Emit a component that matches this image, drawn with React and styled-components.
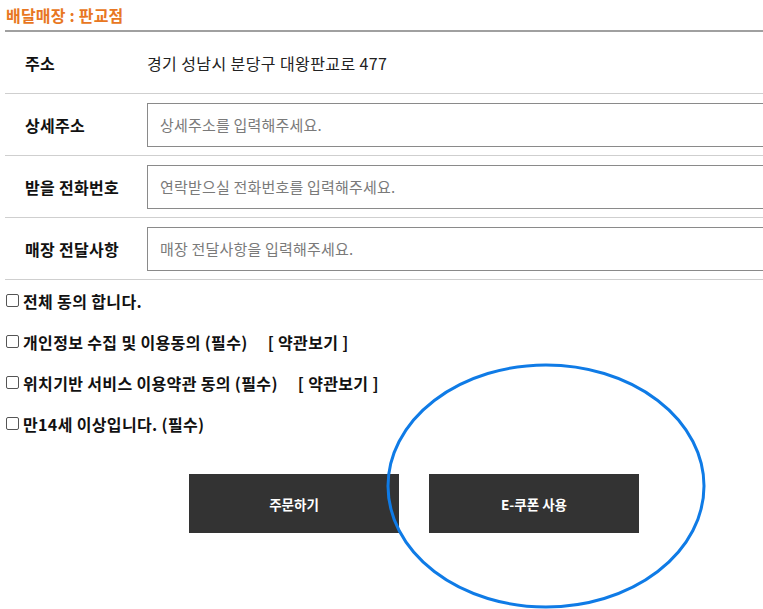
import React from "react";
import styled, { createGlobalStyle } from "styled-components";

const Global = createGlobalStyle`
  html, body { margin: 0; padding: 0; background: #fff; overflow: hidden; }
  body { font-family: "Noto Sans CJK KR", "Noto Sans", sans-serif; color: #222; }
`;

const Page = styled.div`
  position: relative;
  width: 818px;
  min-height: 609px;
  margin-left: 5px;
`;

const Header = styled.div`
  height: 30px;
  display: flex;
  align-items: center;
  padding-left: 1px;
  border-bottom: 2px solid #a0a0a0;
  color: #e87722;
  font-size: 16px;
  font-weight: 700;
  letter-spacing: 0.2px;
`;

const Row = styled.div`
  height: 61px;
  display: flex;
  align-items: center;
  border-bottom: 1px solid #cfcfcf;
`;

const Label = styled.div`
  width: 122px;
  padding-left: 20px;
  font-size: 16px;
  font-weight: 600;
  color: #111;
  letter-spacing: 0.3px;
`;

const Value = styled.div`
  font-size: 16px;
  color: #222;
  letter-spacing: 0.4px;
`;

const Field = styled.input`
  flex: 1;
  height: 44px;
  box-sizing: border-box;
  border: 1px solid #8a8a8a;
  padding: 0 12px;
  font-family: inherit;
  font-size: 15px;
  letter-spacing: 0.2px;
  color: #222;
  outline: none;
  &::placeholder { color: #7a7a7a; }
`;

const Agreements = styled.div`
  display: flex;
  flex-direction: column;
`;

const Agree = styled.label`
  height: 41px;
  display: flex;
  align-items: center;
  gap: 4px;
  padding-left: 1px;
  font-size: 16px;
  font-weight: 700;
  color: #111;
  letter-spacing: 0.35px;
`;

const Box = styled.input.attrs({ type: "checkbox" })`
  appearance: none;
  margin: 0;
  width: 13px;
  height: 13px;
  box-sizing: border-box;
  border: 1px solid #555;
  border-radius: 2px;
  background: #fff;
`;

const Terms = styled.span`
  margin-left: 16px;
`;

const Buttons = styled.div`
  margin-top: 30px;
  display: flex;
  justify-content: center;
  gap: 30px;
`;

const Button = styled.button`
  width: 210px;
  height: 59px;
  border: none;
  background: #333333;
  color: #fff;
  font-family: inherit;
  font-size: 13.5px;
  font-weight: 700;
  letter-spacing: 0;
`;

const Annotation = styled.svg`
  position: absolute;
  left: 0;
  top: 0;
  pointer-events: none;
  overflow: visible;
`;

export default function App() {
  return (
    <>
      <Global />
      <Page>
        <Header>배달매장 : 판교점</Header>
        <Row>
          <Label>주소</Label>
          <Value>경기 성남시 분당구 대왕판교로 477</Value>
        </Row>
        <Row>
          <Label>상세주소</Label>
          <Field placeholder="상세주소를 입력해주세요." />
        </Row>
        <Row>
          <Label>받을 전화번호</Label>
          <Field placeholder="연락받으실 전화번호를 입력해주세요." />
        </Row>
        <Row>
          <Label>매장 전달사항</Label>
          <Field placeholder="매장 전달사항을 입력해주세요." />
        </Row>
        <Agreements>
          <Agree><Box />전체 동의 합니다.</Agree>
          <Agree><Box />개인정보 수집 및 이용동의 (필수)<Terms>[ 약관보기 ]</Terms></Agree>
          <Agree><Box />위치기반 서비스 이용약관 동의 (필수)<Terms>[ 약관보기 ]</Terms></Agree>
          <Agree><Box />만14세 이상입니다. (필수)</Agree>
        </Agreements>
        <Buttons>
          <Button>주문하기</Button>
          <Button>E-쿠폰 사용</Button>
        </Buttons>
        <Annotation width="818" height="609">
          <ellipse cx="541" cy="486" rx="158" ry="121" fill="none" stroke="#0f7be6" strokeWidth="3" />
        </Annotation>
      </Page>
    </>
  );
}
